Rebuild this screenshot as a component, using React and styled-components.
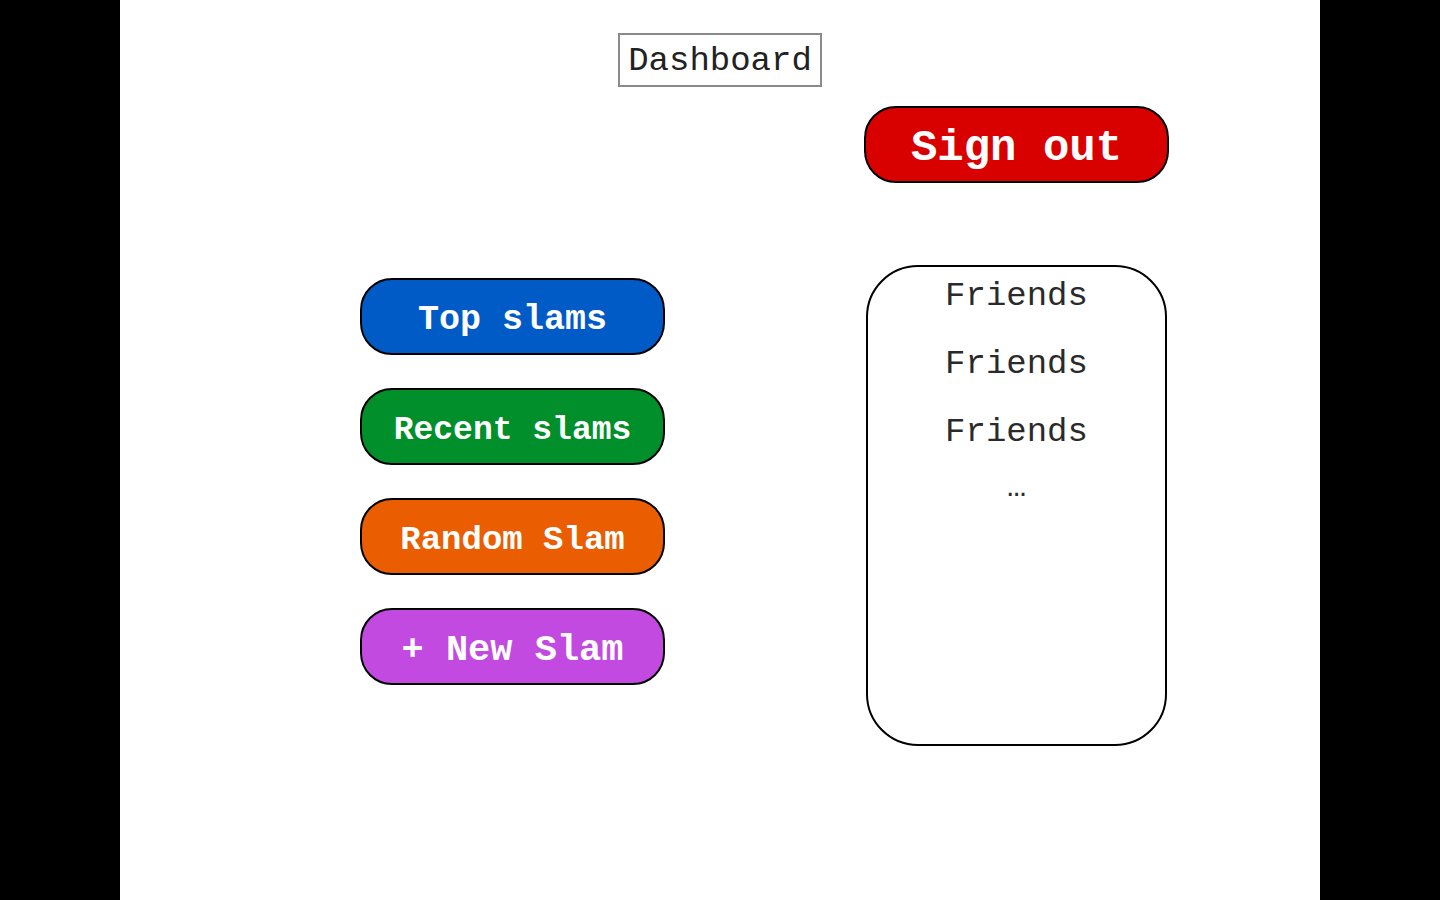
import React from 'react';
import styled, { createGlobalStyle } from 'styled-components';

const mono = `'Courier New', 'Nimbus Mono PS', 'FreeMono', 'Liberation Mono', monospace`;

const GlobalStyle = createGlobalStyle`
  html, body {
    margin: 0;
    padding: 0;
    background: #000;
  }
  body {
    font-family: ${mono};
  }
`;

const Page = styled.div`
  width: 1200px;
  min-height: 100vh;
  margin: 0 auto;
  background: #fff;
  padding-top: 33px;
  box-sizing: border-box;
`;

const Header = styled.div`
  display: flex;
  justify-content: center;
`;

const Title = styled.h1`
  margin: 0;
  border: 2px solid #8a8a8a;
  padding: 7px 8px 5px;
  font-family: ${mono};
  font-weight: normal;
  font-size: 34px;
  line-height: 38px;
  color: #222;
`;

const Columns = styled.div`
  display: flex;
  gap: 199px;
  padding-left: 240px;
  margin-top: 19px;
`;

const LeftColumn = styled.div`
  display: flex;
  flex-direction: column;
  gap: 33px;
  margin-top: 172px;
  width: 305px;
`;

const RightColumn = styled.div`
  display: flex;
  flex-direction: column;
  align-items: center;
  width: 305px;
`;

const PillButton = styled.button`
  width: 305px;
  height: 77px;
  box-sizing: border-box;
  border: 2px solid #000;
  border-radius: 32px;
  background: ${p => p.$bg};
  color: #fff;
  font-family: ${mono};
  font-weight: bold;
  font-size: ${p => p.$size}px;
  padding: 7px 0 0;
  cursor: pointer;
  white-space: pre;
`;

const FriendsPanel = styled.div`
  margin-top: 82px;
  width: 301px;
  height: 481px;
  box-sizing: border-box;
  border: 2px solid #000;
  border-radius: 52px;
  display: flex;
  flex-direction: column;
  align-items: center;
  gap: 30px;
  padding-top: 10px;
`;

const FriendItem = styled.div`
  font-family: ${mono};
  font-size: 34px;
  line-height: 38px;
  height: 38px;
  color: #2a2a2a;
`;

const Ellipsis = styled.div`
  font-family: ${mono};
  font-size: 32px;
  line-height: 24px;
  margin-top: -5px;
  color: #2a2a2a;
`;

const navButtons = [
  { label: 'Top slams', bg: '#005bc6', size: 35 },
  { label: 'Recent slams', bg: '#008f2b', size: 33 },
  { label: 'Random Slam', bg: '#ea5d00', size: 34 },
  { label: '+ New Slam', bg: '#c24ae1', size: 37 },
];

export default function App() {
  return (
    <>
      <GlobalStyle />
      <Page>
        <Header>
          <Title>Dashboard</Title>
        </Header>
        <Columns>
          <LeftColumn>
            {navButtons.map(b => (
              <PillButton key={b.label} $bg={b.bg} $size={b.size}>
                {b.label}
              </PillButton>
            ))}
          </LeftColumn>
          <RightColumn>
            <PillButton $bg="#d90000" $size={44}>Sign out</PillButton>
            <FriendsPanel>
              <FriendItem>Friends</FriendItem>
              <FriendItem>Friends</FriendItem>
              <FriendItem>Friends</FriendItem>
              <Ellipsis>…</Ellipsis>
            </FriendsPanel>
          </RightColumn>
        </Columns>
      </Page>
    </>
  );
}
